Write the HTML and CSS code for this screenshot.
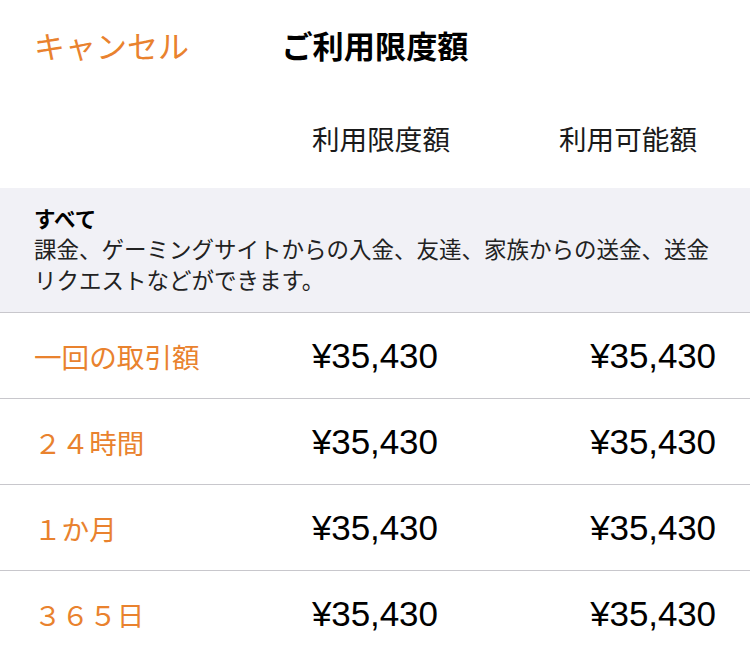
FILE: index.html
```html
<!DOCTYPE html>
<html lang="ja">
<head>
<meta charset="utf-8">
<link rel="stylesheet" href="styles.css">
</head>
<body>
<div class="screen">
  <header class="nav">
    <div class="nav-left"><span class="cancel">キャンセル</span></div>
    <div class="nav-title">ご利用限度額</div>
    <div class="nav-right"></div>
  </header>
  <div class="col-head">
    <div class="cell label"></div>
    <div class="cell mid">利用限度額</div>
    <div class="cell right">利用可能額</div>
  </div>
  <section class="info">
    <div class="info-title">すべて</div>
    <p class="info-desc">課金、ゲーミングサイトからの入金、友達、家族からの送金、送金リクエストなどができます。</p>
  </section>
  <div class="row">
    <div class="cell label">一回の取引額</div>
    <div class="cell mid amount">¥35,430</div>
    <div class="cell right amount">¥35,430</div>
  </div>
  <div class="row">
    <div class="cell label">２４時間</div>
    <div class="cell mid amount">¥35,430</div>
    <div class="cell right amount">¥35,430</div>
  </div>
  <div class="row">
    <div class="cell label">１か月</div>
    <div class="cell mid amount">¥35,430</div>
    <div class="cell right amount">¥35,430</div>
  </div>
  <div class="row">
    <div class="cell label">３６５日</div>
    <div class="cell mid amount">¥35,430</div>
    <div class="cell right amount">¥35,430</div>
  </div>
</div>
</body>
</html>
```

FILE: styles.css
```css
html, body {
  margin: 0;
  padding: 0;
  background: #ffffff;
}
body {
  font-family: "Noto Sans CJK JP", "Noto Sans", sans-serif;
  color: #111;
}
.screen {
  width: 750px;
  overflow: hidden;
}
.nav {
  height: 88px;
  display: grid;
  grid-template-columns: 1fr auto 1fr;
  align-items: center;
}
.nav-left {
  padding-left: 34px;
}
.cancel {
  color: #e9822e;
  font-size: 31px;
}
.nav-title {
  font-size: 31.2px;
  font-weight: 700;
  color: #000;
}
.col-head {
  height: 100px;
  display: flex;
  align-items: center;
  font-size: 27.6px;
  color: #1a1a1a;
}
.cell {
  box-sizing: border-box;
}
.cell.label {
  width: 312px;
  padding-left: 34px;
}
.cell.mid {
  width: 247px;
}
.cell.right {
  width: 191px;
}
.info {
  height: 125px;
  box-sizing: border-box;
  background: #f1f1f6;
  border-bottom: 1px solid #c8c7cc;
  padding: 14px 34px 0 34px;
}
.info-title {
  font-size: 21.5px;
  font-weight: 700;
  line-height: 31px;
  color: #000;
}
.info-desc {
  margin: 0;
  font-size: 22.5px;
  line-height: 31px;
  color: #222;
}
.row {
  height: 86px;
  box-sizing: border-box;
  border-bottom: 1px solid #c8c7cc;
  display: flex;
  align-items: center;
}
.row .cell.label {
  color: #e9822e;
  font-size: 27.6px;
}
.row .cell.right {
  padding-right: 34px;
  text-align: right;
}
.amount {
  font-family: "Liberation Sans", Arial, sans-serif;
  font-size: 35px;
  color: #000;
  letter-spacing: -0.1px;
}
```
